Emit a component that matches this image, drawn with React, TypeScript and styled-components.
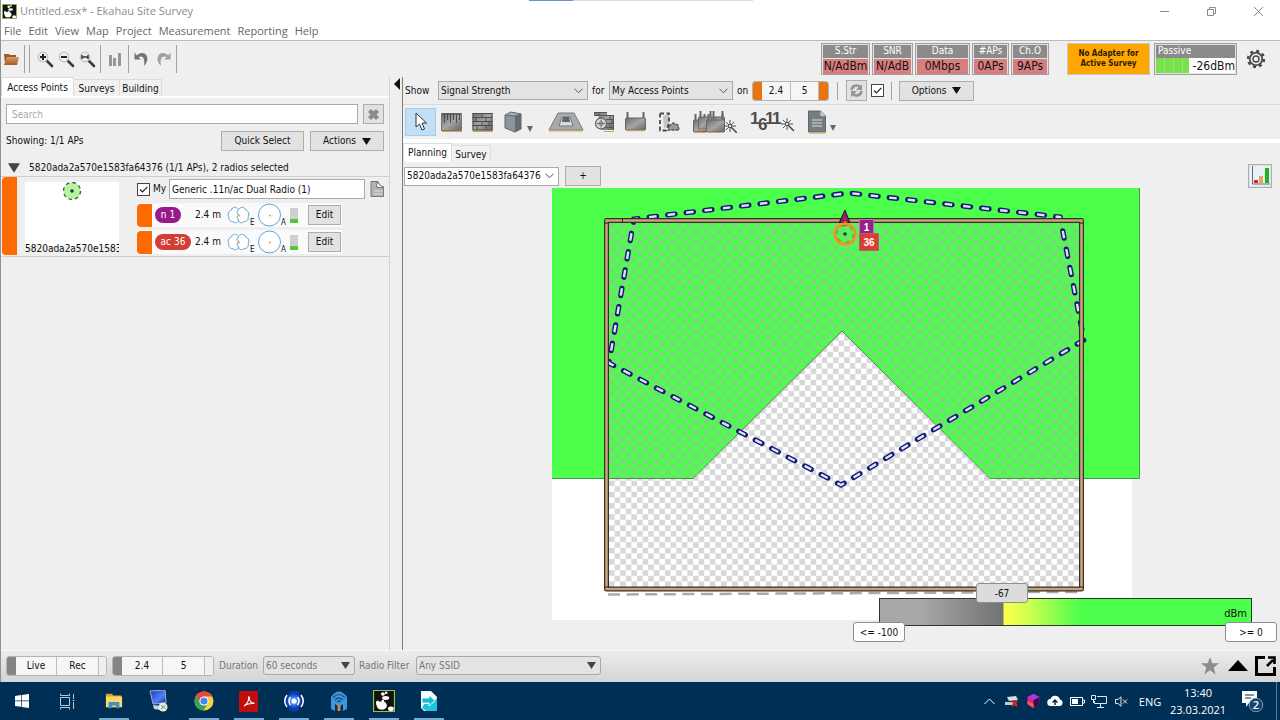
import React from "react";
import styled, { createGlobalStyle, css } from "styled-components";

const Global = createGlobalStyle`
  * { box-sizing: border-box; }
  body { margin: 0; background: #efefef; }
  button, select, input { font: inherit; color: inherit; margin: 0; border-radius: 0; }
  svg { display: block; flex: none; }
`;

const uiFont = `"DejaVu Sans Condensed", "DejaVu Sans", sans-serif`;
const titleFont = `"Open Sans", "Noto Sans", sans-serif`;

const Screen = styled.div`
  display: flex;
  flex-direction: column;
  min-height: 100vh;
  font: 10px/14px ${uiFont};
  color: #111;
  background: #efefef;
`;

const Window = styled.div`
  flex: 1;
  display: flex;
  flex-direction: column;
  border-left: 1px solid #8b9490;
`;

/* Title bar and menu */
const TitleBar = styled.header`
  position: relative;
  display: flex;
  align-items: center;
  height: 22px;
  padding-left: 1px;
  gap: 3px;
  background: #fff;
  color: #8c8c8c;
  font: 11px/16px ${titleFont};
`;
const Title = styled.h1`
  flex: 1;
  margin: 0;
  font-size: 11px;
  font-weight: 400;
`;
const DragHandle = styled.span`
  position: absolute;
  top: 0;
  left: 50%;
  width: 224px;
  height: 1px;
  margin-left: -112px;
  background: linear-gradient(90deg, #6f93bd 44px, #d9d9d9 44px);
`;
const CaptionButton = styled.button`
  display: grid;
  place-items: center;
  width: 44px;
  height: 22px;
  padding: 0;
  border: 0;
  background: none;
  color: #8a8a8a;
`;
const MenuBar = styled.nav`
  display: flex;
  gap: 7px;
  height: 19px;
  padding-left: 3px;
  background: #fff;
  border-bottom: 1px solid #b9bdbd;
  font: 11px/18px ${titleFont};
`;
const MenuLink = styled.a`
  color: #666;
  text-decoration: none;
`;

/* Main tool bar */
const ToolBar = styled.div`
  display: flex;
  align-items: center;
  height: 36px;
  padding-right: 14px;
`;
const Tools = styled.div`
  flex: 1;
  display: flex;
  align-items: center;
`;
const IconButton = styled.button<{ $w?: number; $h?: number; $active?: boolean }>`
  display: flex;
  align-items: center;
  justify-content: center;
  width: ${(p) => p.$w ?? 21}px;
  height: ${(p) => p.$h ?? 28}px;
  padding: 0;
  border: 1px solid ${(p) => (p.$active ? "#a5cdef" : "transparent")};
  background: ${(p) => (p.$active ? "#c2dff5" : "none")};
`;
const Rule = styled.span<{ $h?: number; $m?: number }>`
  width: 1px;
  height: ${(p) => p.$h ?? 28}px;
  margin: 0 ${(p) => p.$m ?? 2}px;
  background: #a0a0a0;
`;
const Metrics = styled.div`
  display: flex;
  gap: 2px;
`;
const Metric = styled.div<{ $w: number }>`
  width: ${(p) => p.$w}px;
  height: 32px;
  border: 1px solid #a0a0a0;
  padding: 1px;
  background: #e2e2e2;
  text-align: center;
  overflow: hidden;
`;
const MetricName = styled.div<{ $left?: boolean }>`
  height: 13px;
  background: #8b8b8b;
  color: #fff;
  line-height: 12px;
  text-align: ${(p) => (p.$left ? "left" : "center")};
  padding-left: ${(p) => (p.$left ? 2 : 0)}px;
`;
const MetricValue = styled.div`
  height: 15px;
  margin-top: 1px;
  background: #d58080;
  color: #1c0d0d;
  font-size: 12px;
  line-height: 15px;
  white-space: nowrap;
`;
const AdapterButton = styled.button`
  width: 83px;
  height: 32px;
  margin: 0 4px 0 18px;
  padding: 0;
  border: 1px solid #c9c9c9;
  background: #ffa602;
  color: #2b1a00;
  font-size: 8px;
  line-height: 10px;
  font-weight: 700;
`;
const PassiveLevel = styled.div`
  display: flex;
  align-items: center;
  justify-content: space-between;
  height: 15px;
  background: #fff;
  font-size: 12px;
`;
const LevelBar = styled.span`
  width: 33px;
  height: 15px;
  background: repeating-linear-gradient(90deg, #7be04e 0 8px, #93ea6c 8px 9px);
`;

/* Work area */
const Body = styled.div`
  flex: 1;
  display: flex;
`;
const SidePanel = styled.aside`
  width: 389px;
  display: flex;
  flex-direction: column;
  border-right: 1px solid #d2d2d2;
`;
const Splitter = styled.div`
  width: 13px;
  display: flex;
  justify-content: flex-end;
  border-right: 1px solid #7c7c7c;
`;
const CollapseButton = styled.button`
  width: 8px;
  height: 14px;
  padding: 0;
  border: 0;
  background: none;
`;
const Tabs = styled.div<{ $plain?: boolean }>`
  display: flex;
  align-items: flex-end;
  height: ${(p) => (p.$plain ? 19 : 21)}px;
  border-bottom: ${(p) => (p.$plain ? "0" : "2px solid #fff")};
`;
const Tab = styled.button<{ $on?: boolean; $w: number; $low?: boolean }>`
  width: ${(p) => p.$w}px;
  height: 17px;
  padding: 0;
  white-space: nowrap;
  border: 1px solid #dcdcdc;
  border-bottom: 0;
  border-left-width: 0;
  background: #f1f1f1;
  line-height: 15px;
  ${(p) => p.$on && css`
    height: 19px;
    background: #fff;
    border-left-width: 1px;
  `}
  ${(p) => p.$low && css`line-height: 18px;`}
`;
const SearchRow = styled.div`
  display: flex;
  gap: 5px;
  padding: 6px 5px 0;
`;
const TextBox = styled.input<{ $pad?: number }>`
  flex: 1;
  min-width: 0;
  height: 20px;
  padding: 0 ${(p) => p.$pad ?? 5}px;
  border: 1px solid #a9a9a9;
  background: #fff;
  &::placeholder { color: #aaa; opacity: 1; }
`;
const Btn = styled.button<{ $w: number; $h?: number }>`
  display: flex;
  align-items: center;
  justify-content: center;
  gap: 6px;
  width: ${(p) => p.$w}px;
  height: ${(p) => p.$h ?? 20}px;
  padding: 0;
  border: 1px solid #adadad;
  background: #e2e2e2;
  white-space: nowrap;
`;
const SummaryRow = styled.div`
  display: flex;
  align-items: center;
  gap: 6px;
  padding: 7px 5px 0;
`;
const Grow = styled.span`
  flex: 1;
`;
const TreeRow = styled.div`
  display: flex;
  align-items: center;
  gap: 9px;
  height: 26px;
  padding: 8px 0 0 7px;
  border-bottom: 1px solid #cfcfcf;
`;
const ApCard = styled.section`
  display: flex;
  height: 80px;
  padding-left: 1px;
  border-bottom: 1px solid #cfcfcf;
`;
const SelectedMark = styled.span<{ $w: number; $h: number }>`
  width: ${(p) => p.$w}px;
  height: ${(p) => p.$h}px;
  border-radius: 4px 0 0 4px;
  background: #ff6a00;
`;
const Thumb = styled.div`
  display: flex;
  flex-direction: column;
  justify-content: space-between;
  width: 94px;
  height: 74px;
  margin: 5px 18px 0 8px;
  background: linear-gradient(#fff 64px, transparent 64px);
  overflow: hidden;
  white-space: nowrap;
`;
const ThumbIcon = styled.span`
  display: flex;
  justify-content: center;
  margin-top: -1px;
`;
const ApDetails = styled.div`
  flex: 1;
  padding-right: 3px;
`;
const ApName = styled.div`
  display: flex;
  align-items: center;
  gap: 3px;
  height: 24px;
`;
const CheckLabel = styled.label`
  display: flex;
  align-items: center;
  gap: 3px;
`;
const Check = styled.input.attrs({ type: "checkbox" })`
  appearance: none;
  width: 13px;
  height: 13px;
  border: 1px solid #444;
  background: #fff url("data:image/svg+xml,%3Csvg xmlns='http://www.w3.org/2000/svg' viewBox='0 0 11 11'%3E%3Cpath d='M2 5.5 4.5 8 9.3 2.8' fill='none' stroke='%23222' stroke-width='1.2'/%3E%3C/svg%3E");
`;
const Radio = styled.div`
  display: flex;
  align-items: center;
  width: 205px;
  height: 24px;
  margin: 2px 0 3px;
  background: #fafafa;
`;
const Pill = styled.div<{ $color: string; $w: number }>`
  width: ${(p) => p.$w}px;
  height: 16px;
  margin-left: 3px;
  border-radius: 8px;
  background: ${(p) => p.$color};
  color: #fff;
  text-align: center;
  line-height: 16px;
`;
const PillSlot = styled.div`
  width: 43px;
`;
const Height = styled.span`
  width: 32px;
`;
const Plot = styled.span<{ $w?: number }>`
  display: flex;
  align-items: flex-end;
  width: ${(p) => p.$w ?? 31}px;
  height: 24px;
  font-size: 8px;
  line-height: 8px;
`;
const Power = styled.span`
  width: 8px;
  height: 15px;
  margin: 0 10px 0 1px;
  background: linear-gradient(#cfcfcf 11px, #52c832 11px);
`;

/* Map view */
const View = styled.main`
  flex: 1;
  min-width: 0;
  display: flex;
  flex-direction: column;
`;
const FilterRow = styled.div`
  display: flex;
  align-items: center;
  height: 28px;
  padding-left: 2px;
  border-bottom: 1px solid #dadada;
`;
const SelectWrap = styled.label<{ $w: number; $white?: boolean; $round?: boolean; $h?: number }>`
  position: relative;
  display: flex;
  align-items: center;
  width: ${(p) => p.$w}px;
  height: ${(p) => p.$h ?? 19}px;
  border: 1px solid #a9a9a9;
  border-radius: ${(p) => (p.$round ? 3 : 0)}px;
  background: ${(p) => (p.$white ? "#fff" : "#e3e3e3")};
  svg { position: absolute; right: 4px; pointer-events: none; }
  select {
    appearance: none;
    width: 100%;
    height: 100%;
    padding: 0 0 0 2px;
    border: 0;
    background: none;
    outline: 0;
    opacity: 1;
  }
`;
const FieldText = styled.span<{ $w: number }>`
  width: ${(p) => p.$w}px;
`;
const Segments = styled.div`
  display: flex;
  height: 20px;
  border: 1px solid #b4b4b4;
  border-radius: 3px;
  background: #f6f6f6;
  overflow: hidden;
`;
const Segment = styled.button<{ $w: number }>`
  width: ${(p) => p.$w}px;
  padding: 0;
  border: 0;
  border-right: 1px solid #bdbdbd;
  background: none;
`;
const Cap = styled.span<{ $color: string; $w?: number }>`
  width: ${(p) => p.$w ?? 9}px;
  background: ${(p) => p.$color};
`;
const EditRow = styled.div`
  display: flex;
  align-items: center;
  height: 38px;
  padding: 0 2px;
  border-bottom: 4px solid #fff;
`;
const FloorRow = styled.div`
  display: flex;
  align-items: center;
  gap: 6px;
  height: 26px;
  padding: 2px 8px 0 1px;
`;
const MapArea = styled.div`
  position: relative;
  flex: 1;
  display: flex;
  min-height: 300px;
`;
const MapSvg = styled.svg`
  flex: 1;
  width: 100%;
  min-width: 0;
`;
const Legend = styled.div`
  position: absolute;
  right: 28px;
  bottom: 24px;
  width: 373px;
  height: 28px;
  border: 1px solid #2a3a2a;
  background: linear-gradient(90deg, #a8a8a8 40px, #727272 123px, #fbff4d 124px, #d8ff4d 145px, #4dff4d 200px);
  font-size: 11px;
  line-height: 30px;
  text-align: right;
  padding-right: 4px;
`;
const LegendTag = styled.span<{ $x: number; $y: number; $grey?: boolean }>`
  position: absolute;
  left: ${(p) => p.$x}px;
  top: ${(p) => p.$y}px;
  width: 52px;
  height: 20px;
  border: 1px solid #8e8e8e;
  border-radius: 3px;
  background: ${(p) => (p.$grey ? "#dcdcdc" : "#fff")};
  font-size: 10px;
  line-height: 19px;
  text-align: center;
`;

/* Survey control bar */
const StatusBar = styled.div`
  display: flex;
  align-items: center;
  height: 32px;
  padding: 0 4px 2px 5px;
  background: linear-gradient(#ececec, #d4d4d4);
  border-top: 1px solid #f8f8f8;
`;
const Muted = styled.span<{ $w: number }>`
  width: ${(p) => p.$w}px;
  color: #777;
  white-space: nowrap;
`;
const Gap = styled.span<{ $w: number }>`
  width: ${(p) => p.$w}px;
`;

/* Desktop task bar */
const TaskBar = styled.footer`
  display: flex;
  height: 38px;
  background: #002f55;
  color: #fff;
  font: 11px/17px ${titleFont};
`;
const TaskButton = styled.button<{ $open?: boolean; $w?: number }>`
  display: grid;
  place-items: center;
  width: ${(p) => p.$w ?? 45}px;
  height: 38px;
  padding: 0;
  border: 0;
  background: ${(p) => (p.$open ? "linear-gradient(#76a9d4,#76a9d4) 50% 100% / 30px 2px no-repeat" : "none")};
`;
const TaskGroup = styled.div`
  display: flex;
  gap: 0;
  padding-left: 3px;
`;
const Tray = styled.div`
  flex: 1;
  display: flex;
  justify-content: flex-end;
  align-items: center;
`;
const TrayIcon = styled.span`
  display: grid;
  place-items: center;
  width: 22px;
`;
const Lang = styled.span`
  width: 36px;
  text-align: center;
`;
const Clock = styled.time`
  width: 60px;
  text-align: center;
  white-space: nowrap;
`;
const Notice = styled.button`
  display: grid;
  place-items: center;
  width: 49px;
  height: 38px;
  padding: 0;
  border: 0;
  border-right: 1px solid #5d7a94;
  margin-right: 3px;
  background: none;
`;

const Down = ({ s = 9, color = "currentColor" }: { s?: number; color?: string }) => (
  <svg width={s} height={s - 2} viewBox="0 0 9 7"><path d="M0 0h9L4.500 7z" fill={color} /></svg>
);
const Chevron = () => (
  <svg width="9" height="6" viewBox="0 0 9 6"><path d="M.5.7 4.500 4.800 8.500.7" fill="none" stroke="#555" /></svg>
);
const Logo = ({ s }: { s: number }) => (
  <svg width={s} height={s} viewBox="0 0 20 22" preserveAspectRatio="none">
    <rect x=".5" y=".5" width="19" height="21" fill="#10140c" stroke="#9bc63b" />
    <circle cx="9" cy="4" r="1.800" fill="#fff" /><circle cx="12" cy="2.800" r="1.200" fill="#fff" />
    <ellipse cx="11.500" cy="8" rx="3.200" ry="1.900" fill="#fff" />
    <ellipse cx="8" cy="15.500" rx="4.600" ry="4.300" fill="#fff" /><ellipse cx="4.200" cy="13" rx="1.600" ry="2.600" fill="#fff" />
    <circle cx="9" cy="11" r="1.200" fill="#fff" /><ellipse cx="16.300" cy="18.700" rx="2.700" ry="2.300" fill="#fff" />
  </svg>
);
const Zoom = ({ kind }: { kind: "in" | "out" | "fit" }) => (
  <svg width="17" height="17" viewBox="0 0 17 17">
    <path d="m9.500 9.500 5.500 5.500" stroke="#3c3c3c" strokeWidth="2.600" strokeLinecap="round" />
    <circle cx="6" cy="6" r="4.800" fill="#ededed" stroke="#c4c4c4" strokeWidth="1.300" />
    {kind === "fit"
      ? <path d="M2.500 6h7M3 4v4M9 4v4" stroke="#333" strokeWidth="1.400" />
      : <path d={kind === "in" ? "M3 6h6M6 3v6" : "M3 6h6"} stroke="#222" strokeWidth="2" />}
  </svg>
);
const Undo = ({ flip }: { flip?: boolean }) => (
  <svg width="17" height="17" viewBox="0 0 17 17">
    <g transform={flip ? "matrix(-1 0 0 1 17 0)" : undefined}>
      <path d="M1.500 1.500v7h6.500L5.500 6.200C9 4 12.500 7 11 15 16.500 10 15 2 9 2 6.800 2 5 3 3.800 4.400z" fill={flip ? "#a0a0a0" : "#747474"} />
    </g>
  </svg>
);
const DefsHolder = styled.svg`
  position: absolute;
`;
const MetalDefs = () => (
  <DefsHolder width="0" height="0">
    <defs>
      <linearGradient id="metal" x1="0" y1="0" x2="1" y2="1">
        <stop offset="0" stopColor="#6c6c6c" /><stop offset=".5" stopColor="#a5a5a5" /><stop offset="1" stopColor="#666" />
      </linearGradient>
      <linearGradient id="folder" x1="0" y1="0" x2="0" y2="1">
        <stop offset="0" stopColor="#e09a62" /><stop offset="1" stopColor="#a95a20" />
      </linearGradient>
      <linearGradient id="blue" x1="0" y1="0" x2="1" y2="1">
        <stop offset="0" stopColor="#1a2fd0" /><stop offset=".6" stopColor="#4d83f0" /><stop offset="1" stopColor="#0b1f9c" />
      </linearGradient>
      <radialGradient id="orb"><stop offset="0" stopColor="#bfe6ff" /><stop offset=".5" stopColor="#2b74e8" /><stop offset="1" stopColor="#0a2aa0" /></radialGradient>
    </defs>
  </DefsHolder>
);
const Wand = ({ x, y }: { x: number; y: number }) => (
  <g transform={`translate(${x} ${y})`} stroke="#444" strokeWidth=".9">
    <path d="M0 6h12M6 0v12M2 2l8 8M10 2 2 10" /><path d="m7 7 6 6" strokeWidth="1.500" /><circle cx="6" cy="6" r="1.600" fill="#fff" />
  </g>
);
const Router = ({ x = 0, y = 0, w = 20 }: { x?: number; y?: number; w?: number }) => (
  <g transform={`translate(${x} ${y})`}>
    <path d={`M2.500 0v8M${w - 2.5} 0v8`} stroke="#666" strokeWidth="2" />
    <rect x=".5" y="6" width={w - 1} height="12" rx="1" fill="url(#metal)" stroke="#666" />
    <path d={`M1 18.800h${w - 2}`} stroke="#d8a24a" />
  </g>
);
const Elevation = () => (
  <svg width="23" height="24" viewBox="0 0 23 24">
    <path d="M11.500 6.500C9.500 3.500 5 3.500 4.500 7 1 8 .5 12 1.800 13.500 1 17 4 19 6 18.500c2 2.500 5 1 5.500-1.500.5 2.500 3.500 4 5.500 1.500 2 .5 5-1.500 4.200-5 1.300-1.500.8-5.500-2.700-6.500-.5-3.500-5-3.500-7-.5z" fill="#fff" stroke="#56a5d8" />
    <path d="M11.500 6.500q-3 3 0 5.500-3 2 0 5" fill="none" stroke="#56a5d8" /><circle cx="12" cy="12.500" r="1" fill="#f29a3b" />
  </svg>
);
const Azimuth = () => (
  <svg width="23" height="24" viewBox="0 0 23 24">
    <circle cx="11.500" cy="12" r="11" fill="#fff" stroke="#56a5d8" /><circle cx="12" cy="12.500" r="1" fill="#f29a3b" />
  </svg>
);
const PageIcon = () => (
  <svg width="14" height="16" viewBox="0 0 14 16">
    <path d="M1 .500h7l2 5h3.500v10H1z" fill="#b4b4b4" stroke="#777" /><path d="m6 .500 7.500 6H7z" fill="#eee" stroke="#777" /><path d="M4 10h9M4 13h9" stroke="#ddd" />
  </svg>
);

const menu = ["File", "Edit", "View", "Map", "Project", "Measurement", "Reporting", "Help"];
const metrics: [string, string, number][] = [
  ["S.Str", "N/AdBm", 49], ["SNR", "N/AdB", 41], ["Data", "0Mbps", 55], ["#APs", "0APs", 37], ["Ch.O", "9APs", 38],
];
const radios = [
  { name: "n 1", color: "#98198a", w: 26 },
  { name: "ac 36", color: "#d43c36", w: 36 },
];

const perimeter = "M609 363 634 219 849 193 1060 217 1084 340 841 485Z";

function FloorMap() {
  return (
    <MapSvg viewBox="403 188 877 462" preserveAspectRatio="xMidYMin meet" role="img" aria-label="Signal strength map">
      <defs>
        <pattern id="check" x="609" y="223" width="11.200" height="11.200" patternUnits="userSpaceOnUse">
          <path d="M0 0h5.600v5.600H0zM5.600 5.600h5.600v5.600H5.600z" fill="#d8d8d8" />
        </pattern>
        <pattern id="checkGreen" x="609" y="223" width="11.200" height="11.200" patternUnits="userSpaceOnUse">
          <path d="M0 0h5.600v5.600H0zM5.600 5.600h5.600v5.600H5.600z" fill="#74dc74" />
        </pattern>
        <clipPath id="coverage"><path d="M552 188h587v290H990L842 331 693 478H552z" /></clipPath>
      </defs>
      <path d="M552 188h580v432H552z" fill="#fff" />
      <path d="M608 222h473v366H608z" fill="url(#check)" />
      <g clipPath="url(#coverage)">
        <path d="M552 188h588v290H552z" fill="#4bff4b" />
        <path d="M608 222h473v366H608z" fill="url(#checkGreen)" />
      </g>
      <path d="M1139.500 188v290.500H990L842 331 693 478.500H552" fill="none" stroke="#4f8f4f" strokeWidth="1" />
      <path d={perimeter} fill="none" stroke="#14187a" strokeWidth="5.200" strokeLinecap="round" strokeDasharray="7.500 11.100" strokeDashoffset="6" />
      <path d={perimeter} fill="none" stroke="#dfe3f2" strokeWidth="2.400" strokeDasharray="7.500 11.100" strokeDashoffset="6" />
      <path d="M608 594.500 976 592.500M1028 592h50" stroke="#aaa" strokeWidth="2.500" strokeDasharray="12 6.600" />
      <path d="M606.500 220.500H1081.500V589H606.500z" fill="none" stroke="#3a2e24" strokeWidth="5" strokeLinejoin="round" />
      <path d="M606.500 220.500H1081.500V589H606.500z" fill="none" stroke="#c5a37c" strokeWidth="2.600" />
      <path d="M622.500 218v5M604 223h5M1079 223h5M604 587h5M1079 587h5" stroke="#2a211a" />
      <path d="m845 210 5 13-4-3-1 5-2-5-4 3z" fill="#94207c" stroke="#30102c" />
      <path d="m845 219 3 7h-6z" fill="#f0402a" />
      <circle cx="845" cy="234" r="10.300" fill="none" stroke="#f59222" strokeWidth="2.600" />
      <circle cx="845" cy="234" r="8.300" fill="none" stroke="#4e8a30" strokeDasharray="4 4.700" />
      <circle cx="845" cy="234" r="1.800" fill="#2b3a22" />
      <path d="M859.500 219.500h14v15h-14z" fill="#99208a" stroke="#b777b0" />
      <path d="M859.500 233.500h19v17h-19z" fill="#d83d36" stroke="#a06c60" />
      <g fill="#fff" fontFamily="Liberation Sans, sans-serif" fontSize="10" fontWeight="700" textAnchor="middle">
        <text x="866.500" y="231">1</text><text x="869" y="246">36</text>
      </g>
    </MapSvg>
  );
}

function SideContent() {
  return (
    <SidePanel>
      <Tabs role="tablist">
        <Tab role="tab" $on $w={73}>Access Points</Tab>
        <Tab role="tab" $w={46}>Surveys</Tab>
        <Tab role="tab" $w={42}>Building</Tab>
      </Tabs>
      <SearchRow>
        <TextBox placeholder="Search" aria-label="Search" />
        <Btn $w={21} aria-label="Clear search">
          <svg width="13" height="13" viewBox="0 0 13 13"><path d="m2.500 2.500 8 8M10.500 2.500l-8 8" stroke="#8b8b8b" strokeWidth="4.400" /></svg>
        </Btn>
      </SearchRow>
      <SummaryRow>
        Showing: 1/1 APs <Grow />
        <Btn $w={83}>Quick Select</Btn>
        <Btn $w={74}>Actions <Down /></Btn>
      </SummaryRow>
      <TreeRow><Down s={12} color="#444" />5820ada2a570e1583fa64376 (1/1 APs), 2 radios selected</TreeRow>
      <ApCard>
        <SelectedMark $w={15} $h={78} />
        <Thumb>
          <ThumbIcon>
            <svg width="20" height="20" viewBox="0 0 20 20">
              <circle cx="10" cy="10" r="8.500" fill="#b9f2a0" stroke="#3c5a34" strokeWidth="1.300" strokeDasharray="3.500 3.200" /><circle cx="10" cy="10" r="1.800" fill="#333" />
            </svg>
          </ThumbIcon>
          5820ada2a570e1583fa64376
        </Thumb>
        <ApDetails>
          <ApName>
            <CheckLabel><Check defaultChecked /> My</CheckLabel>
            <TextBox $pad={2} defaultValue="Generic .11n/ac Dual Radio (1)" aria-label="Access point name" />
            <IconButton $w={18} $h={20} aria-label="Notes"><PageIcon /></IconButton>
          </ApName>
          {radios.map((r) => (
            <Radio key={r.name}>
              <SelectedMark $w={15} $h={23} />
              <PillSlot><Pill $color={r.color} $w={r.w}>{r.name}</Pill></PillSlot>
              <Height>2.4 m</Height>
              <Plot><Elevation />E</Plot>
              <Plot><Azimuth />A</Plot>
              <Power />
              <Btn $w={33}>Edit</Btn>
            </Radio>
          ))}
        </ApDetails>
      </ApCard>
    </SidePanel>
  );
}

function Editing() {
  return (
    <EditRow>
      <IconButton $w={31} $active aria-label="Select">
        <svg width="14" height="20" viewBox="0 0 14 20"><path d="M2 1v14l3.500-3 2.500 6 2.500-1L8 11h4.500z" fill="#fff" stroke="#333" /></svg>
      </IconButton>
      <IconButton $w={31} aria-label="Scale">
        <svg width="22" height="20" viewBox="0 0 22 20"><path d="M.5 1.500h20v17H.5z" fill="url(#metal)" stroke="#777" /><path d="M1 2h19M3.500 2v9M6.500 2v6M9.500 2v9M12.500 2v6M15.500 2v9M18.500 2v6" stroke="#4c4c4c" /><path d="M1 19.500h20" stroke="#d8a24a" /></svg>
      </IconButton>
      <IconButton $w={31} aria-label="Walls">
        <svg width="22" height="20" viewBox="0 0 22 20"><path d="M.5 1h20v17.500H.5z" fill="url(#metal)" /><path d="M.5 1.500h20M.5 5.500h20M.5 9.500h20M.5 13.500h20M.5 18h20M1 1v17M20 1v17M10 1v4M4 5v4M14 5v4M10 9v4M17 9v4M5 13v5M14 13v5" stroke="#4c4c4c" /><path d="M1 19.500h20" stroke="#d8a24a" /></svg>
      </IconButton>
      <IconButton $w={41} aria-label="Attenuation area">
        <svg width="29" height="22" viewBox="0 0 29 22"><path d="M1 4v13l10 4V5z" fill="#8e949b" /><path d="m11 5 6-2v15l-6 3z" fill="#666b72" /><path d="m1 4 6-3 10 2-6 2z" fill="#a9afb5" stroke="#666" /><path d="M1 4v13l10 4 6-3V3" fill="none" stroke="#666" /><path d="M23 15h6l-3 6z" fill="#666" /></svg>
      </IconButton>
      <Gap $w={7} />
      <IconButton $w={40} aria-label="Floor opening">
        <svg width="36" height="20" viewBox="0 0 36 20"><path d="M10 1h16l9 17H1z" fill="#a7abb0" stroke="#777" /><path d="M14 5h8l3 9H11z" fill="#d8dade" stroke="#777" /><path d="M15 5h6l1 5h-8z" fill="#5d6168" /><path d="M1 19h34" stroke="#d8a24a" /></svg>
      </IconButton>
      <IconButton $w={36} aria-label="Auto planner">
        <svg width="22" height="22" viewBox="0 0 22 22"><path d="M1 1h13v4H1zM5 4h16v15H9z" fill="url(#metal)" /><path d="M1 1.500h13M1 4.500h20M13 8.500h8M14 12.500h7M13 16.500h8M6 1v3M17 5v3M19 9v3M17 13v3M20.500 4v15" stroke="#555" /><circle cx="8" cy="12.500" r="5.500" fill="#ddd" stroke="#666" strokeWidth="1.300" /><path d="M4 12.500h8M8 8.500v8" stroke="#666" /><circle cx="8" cy="12.500" r="2.200" fill="none" stroke="#888" /><path d="M11 20.500h10" stroke="#d8a24a" /></svg>
      </IconButton>
      <IconButton $w={27} aria-label="Access point"><svg width="22" height="20" viewBox="0 0 22 20"><Router w={21} /></svg></IconButton>
      <IconButton $w={40} aria-label="Coverage area">
        <svg width="22" height="20" viewBox="0 0 22 20"><path d="m5 4 6-2v10l-5 5z" fill="#c4c4c4" /><path d="M2 1.500h9v10l-3 7H2z" fill="none" stroke="#4c4c4c" strokeWidth="1.800" strokeDasharray="4 2.500" /><path d="m11 14 4-3 5 2 1 5H10z" fill="#999" stroke="#555" strokeWidth="1.400" strokeDasharray="3 1" /></svg>
      </IconButton>
      <IconButton $w={52} aria-label="Optimize access points">
        <svg width="44" height="22" viewBox="0 0 44 22"><Router x={0} y={3} w={14} /><Router x={5} y={0} w={15} /><Router x={18} y={0} w={14} /><Router x={13} y={3} w={19} /><Wand x={31} y={9} /></svg>
      </IconButton>
      <IconButton $w={62} aria-label="Channel planner">
        <svg width="44" height="24" viewBox="0 0 44 24">
          <g fontFamily="Liberation Sans, sans-serif" fontWeight="700" fontSize="17" fill="#4c4c4c"><text x="0" y="14">1</text><text x="8" y="20">6</text><text x="15" y="14">1</text><text x="22" y="14">1</text></g>
          <Wand x={31} y={8} />
        </svg>
      </IconButton>
      <IconButton $w={38} aria-label="Report">
        <svg width="28" height="24" viewBox="0 0 28 24"><path d="M.5 1h12l5 5v16H.5z" fill="#777c80" stroke="#666" /><path d="M12.500 1v5h5z" fill="#ccc" /><path d="M4 10h10M4 13h10M4 16h10" stroke="#ddd" /><path d="M1 23h17" stroke="#d8a24a" /><path d="M22 15h6l-3 6z" fill="#666" /></svg>
      </IconButton>
    </EditRow>
  );
}

const taskIcons: [string, React.ReactNode, boolean][] = [
  ["File Explorer", <svg key="a" width="18" height="20" viewBox="0 0 20 20"><path d="M1 2h7l1 2h9v4H1z" fill="#d9a72e" /><path d="M1 5h18v12H1z" fill="#ffd767" /><path d="M4 18v-7h12v7h-4v-3H8v3z" fill="#3f91c9" /></svg>, true],
  ["Remote Desktop", <svg key="b" width="20" height="22" viewBox="0 0 20 22"><path d="m1 1 15-1 1 13-13 1z" fill="url(#blue)" stroke="#aac" /><path d="m4 15 9 1-2 4-6-1z" fill="#ccd" /><circle cx="14" cy="17" r="4.500" fill="#e8e8e8" /><path d="m12 15 2 2-2 2M16.500 15l-2 2 2 2" fill="none" stroke="#4a4" /></svg>, false],
  ["Chrome", <svg key="c" width="20" height="20" viewBox="0 0 20 20"><circle cx="10" cy="10" r="9.500" fill="#fdcf3f" /><path d="M1.800 5.200A9.500 9.500 0 0 1 18.300 5.500H10L6 12z" fill="#e24a3c" /><path d="M1.800 5.200A9.500 9.500 0 0 0 9.500 19.500L14 12H6z" fill="#34a353" /><circle cx="10" cy="10" r="4.600" fill="#fff" /><circle cx="10" cy="10" r="3.600" fill="#4285f4" /></svg>, true],
  ["Acrobat Reader", <svg key="d" width="19" height="21" viewBox="0 0 19 21"><path d="M0 0h19v21H0z" fill="#c20d0d" /><path d="M5 15c3-2 5-5 4.500-8.500 0-1 .8-1 .8 0 0 4 2 5.500 4.700 5.500 1 1-6-.5-10 3z" fill="none" stroke="#fff" strokeWidth="1.100" /></svg>, true],
  ["TamoGraph", <svg key="e" width="22" height="22" viewBox="0 0 22 22"><path d="M6 2q5-2.500 10 0v18q-5 3-10 0z" fill="#1238b8" /><circle cx="11" cy="11" r="8.500" fill="url(#orb)" /><path d="M4 5q-4.500 6 0 12M18 5q4.500 6 0 12M7.500 7q-3 4 0 8M14.500 7q3 4 0 8" fill="none" stroke="#fff" strokeWidth="1.500" /><circle cx="11" cy="11" r="2.600" fill="#fff" /></svg>, true],
  ["Wi-Fi Scanner", <svg key="f" width="18" height="22" viewBox="0 0 18 22"><path d="M1 7q8-11 16 0v12l-4 2v-7l-4 3-4-3v7l-4-2z" fill="#3f98dc" /><path d="M3 8q6-7 12 0M5 10q4-4 8 0M7 12q2-2 4 0" fill="none" stroke="#164f86" strokeWidth="1.200" /><path d="M7.500 15h3v6h-3z" fill="#e0812f" /></svg>, true],
  ["Ekahau Site Survey", <Logo key="g" s={22} />, true],
  ["File Transfer", <svg key="h" width="18" height="22" viewBox="0 0 18 22"><path d="M1 1h10l6 6v14H4l-3-3z" fill="#f4fbfc" /><path d="M4 14h8l5-6v13H6l-4-3z" fill="#1cc5dc" /><path d="M2 8h7V5l6 5.500L9 16v-3H2z" fill="#18b9d6" stroke="#fff" strokeWidth=".8" /></svg>, true],
];

export default function App() {
  return (
    <Screen>
      <Global />
      <MetalDefs />
      <Window>
        <TitleBar>
          <Logo s={15} />
          <Title>Untitled.esx* - Ekahau Site Survey</Title>
          <CaptionButton aria-label="Minimize"><svg width="9" height="9"><path d="M0 4.500h9" stroke="currentColor" /></svg></CaptionButton>
          <CaptionButton aria-label="Restore"><svg width="9" height="9"><path d="M.5 2.500h6v6h-6zM2.500 2.500v-2h6v6h-2" fill="none" stroke="currentColor" /></svg></CaptionButton>
          <CaptionButton aria-label="Close"><svg width="9" height="9"><path d="m0 0 9 9M9 0 0 9" stroke="currentColor" /></svg></CaptionButton>
          <DragHandle />
        </TitleBar>
        <MenuBar>{menu.map((m) => <MenuLink key={m} href="#">{m}</MenuLink>)}</MenuBar>
        <ToolBar>
          <Tools>
            <IconButton aria-label="Open">
              <svg width="16" height="14" viewBox="0 0 16 14"><path d="M0 2h5l1 1h6v3H3L1 12z" fill="#9c5a2b" /><path d="M3 5h12l-2 8H0z" fill="url(#folder)" /></svg>
            </IconButton>
            <Rule /><Rule /><Gap $w={3} />
            <IconButton aria-label="Zoom in"><Zoom kind="in" /></IconButton>
            <IconButton aria-label="Zoom out"><Zoom kind="out" /></IconButton>
            <IconButton aria-label="Zoom to fit"><Zoom kind="fit" /></IconButton>
            <Rule />
            <IconButton $w={24} aria-label="Statistics"><svg width="12" height="13"><path d="M0 2h3v11H0zM4 5h3v8H4zM9 0h3v13H9z" fill="#969696" /></svg></IconButton>
            <Rule $m={1} />
            <IconButton $w={22} aria-label="Undo"><Undo /></IconButton>
            <IconButton $w={22} aria-label="Redo"><Undo flip /></IconButton>
            <Rule />
          </Tools>
          <Metrics>
            {metrics.map(([n, v, w]) => <Metric key={n} $w={w}><MetricName>{n}</MetricName><MetricValue>{v}</MetricValue></Metric>)}
          </Metrics>
          <AdapterButton>No Adapter for Active Survey</AdapterButton>
          <Metric $w={83}><MetricName $left>Passive</MetricName><PassiveLevel><LevelBar />-26dBm</PassiveLevel></Metric>
          <Gap $w={8} />
          <IconButton aria-label="Settings">
            <svg width="20" height="20" viewBox="0 0 20 20" fill="none" stroke="#4a4a4a"><circle cx="10" cy="10" r="8" strokeWidth="2.400" strokeDasharray="3 3.280" /><circle cx="10" cy="10" r="6.300" strokeWidth="1.800" /><circle cx="10" cy="10" r="3" strokeWidth="1.400" /></svg>
          </IconButton>
        </ToolBar>
        <Body>
          <SideContent />
          <Splitter><CollapseButton aria-label="Collapse panel"><svg width="6" height="12"><path d="M6 0v12L0 6z" fill="#111" /></svg></CollapseButton></Splitter>
          <View>
            <FilterRow>
              <FieldText $w={33}>Show</FieldText>
              <SelectWrap $w={150}><select aria-label="Show"><option>Signal Strength</option></select><Chevron /></SelectWrap>
              <Gap $w={4} /><FieldText $w={17}>for</FieldText>
              <SelectWrap $w={124}><select aria-label="For"><option>My Access Points</option></select><Chevron /></SelectWrap>
              <Gap $w={4} /><FieldText $w={15}>on</FieldText>
              <Segments><Cap $color="#e87511" /><Segment $w={29}>2.4</Segment><Segment $w={28}>5</Segment><Cap $color="#e87511" /></Segments>
              <Rule $h={18} $m={8} />
              <Btn $w={21} $h={21} aria-label="Refresh">
                <svg width="15" height="15" viewBox="0 0 15 15"><path d="M2.500 7a5 5 0 0 1 8.500-3M12.500 8a5 5 0 0 1-8.500 3" fill="none" stroke="#959595" strokeWidth="2.600" /><path d="M13 1v6H7zM2 14V8h6z" fill="#959595" /></svg>
              </Btn>
              <Gap $w={4} /><Check defaultChecked aria-label="Auto refresh" />
              <Rule $h={18} $m={7} />
              <Btn $w={75}>Options <Down /></Btn>
            </FilterRow>
            <Editing />
            <Tabs role="tablist" $plain>
              <Tab role="tab" $on $w={49} $low>Planning</Tab>
              <Tab role="tab" $w={39}>Survey</Tab>
            </Tabs>
            <FloorRow>
              <SelectWrap $w={155} $white><select aria-label="Floor plan"><option>5820ada2a570e1583fa64376</option></select><Chevron /></SelectWrap>
              <Btn $w={36}>+</Btn>
              <Grow />
              <Btn $w={24} $h={24} aria-label="Toggle visualization">
                <svg width="20" height="20" viewBox="0 0 20 20"><path d="M0 0h20v20H0z" fill="#e8f1f8" /><path d="M2.500 0v18H20" fill="none" stroke="#667" /><path d="M4 14h4v3H4z" fill="#d22" /><path d="M9 10h4v7H9z" fill="#f0a050" /><path d="M15 2h4v15h-4z" fill="#1bb51b" /></svg>
              </Btn>
            </FloorRow>
            <MapArea>
              <FloorMap />
              <Legend>
                dBm
                <LegendTag $x={96} $y={-16} $grey>-67</LegendTag>
                <LegendTag $x={-27} $y={23}>&lt;= -100</LegendTag>
                <LegendTag $x={345} $y={23}>&gt;= 0</LegendTag>
              </Legend>
            </MapArea>
          </View>
        </Body>
        <StatusBar>
          <Segments><Cap $color="#858585" /><Segment $w={41}>Live</Segment><Segment $w={42}>Rec</Segment><Cap $color="#f0f0f0" $w={7} /></Segments>
          <Gap $w={5} />
          <Segments><Cap $color="#858585" /><Segment $w={41}>2.4</Segment><Segment $w={42}>5</Segment><Cap $color="#f0f0f0" $w={8} /></Segments>
          <Gap $w={5} />
          <Muted $w={44}>Duration</Muted>
          <SelectWrap as="span" $w={92} $round><Muted as="select" $w={90} aria-label="Duration" disabled><option>60 seconds</option></Muted><Down color="#444" /></SelectWrap>
          <Gap $w={4} />
          <Muted $w={57}>Radio Filter</Muted>
          <SelectWrap as="span" $w={185} $round><Muted as="select" $w={183} aria-label="Radio Filter" disabled><option>Any SSID</option></Muted><Down color="#444" /></SelectWrap>
          <Grow />
          <svg width="18" height="18" viewBox="0 0 18 18"><path d="m9 0 2.300 6.200H18l-5.300 4.200 1.900 7L9 13.200l-5.600 4.200 1.900-7L0 6.200h6.700z" fill="#8d8d8d" /></svg>
          <Gap $w={9} />
          <svg width="20" height="11"><path d="M10 0 20 11H0z" fill="#000" /></svg>
          <Gap $w={7} />
          <svg width="21" height="20" viewBox="0 0 21 20"><path d="M10 1.500H1.500v17h18V11" fill="none" stroke="#000" strokeWidth="3" /><path d="m12 10 6-6M13 1.500h6.500V8" fill="none" stroke="#000" strokeWidth="2.600" /></svg>
        </StatusBar>
      </Window>
      <TaskBar>
        <TaskButton $w={44} aria-label="Start"><svg width="14" height="14" viewBox="0 0 14 14"><path d="m0 2 6-.9v5.500H0zM6.700 1 14 0v6.600H6.700zM0 7.300h6v5.500L0 12zM6.700 7.300H14V14l-7.300-1z" fill="#fff" /></svg></TaskButton>
        <TaskButton $w={44} aria-label="Task view"><svg width="17" height="17" viewBox="0 0 17 17" fill="none" stroke="#b9c8d6"><path d="M2.500 4.500h9v8h-9zM2.500.5v2h9v-2M2.500 16.500v-2h9v2M15.500 1v5M15.500 9v7M14.500 7.500h2" /></svg></TaskButton>
        <TaskGroup>
          {taskIcons.map(([label, icon, open]) => <TaskButton key={label} aria-label={label} $open={open}>{icon}</TaskButton>)}
        </TaskGroup>
        <Tray>
          <TrayIcon><svg width="11" height="7"><path d="m.5 6 5-5 5 5" fill="none" stroke="#fff" /></svg></TrayIcon>
          <TrayIcon><svg width="15" height="13" viewBox="0 0 15 13"><path d="m3 2 9-1 2 4-9 1z" fill="#ddd" /><path d="M1 7h10l2 3H1z" fill="#c9c9c9" /><path d="m8 6 5 5M13 6l-5 5" stroke="#e02a2a" strokeWidth="2" /></svg></TrayIcon>
          <TrayIcon><svg width="13" height="14" viewBox="0 0 13 14"><path d="m6.500 0 6 3v7l-6 4-6-4V3z" fill="#e0267c" /><path d="m6.500 6 6-3v7l-6 4z" fill="#2a124c" /><path d="m.5 3 6-3 6 3-6 3z" fill="#a33be0" /><path d="m.5 7 6 3v4l-6-4z" fill="#ff5a4c" /></svg></TrayIcon>
          <TrayIcon><svg width="16" height="12" viewBox="0 0 16 12"><path d="M4 11a3.500 3.500 0 0 1-.5-7A5 5 0 0 1 13 4.500 3.300 3.300 0 0 1 12.500 11z" fill="#fff" /><path d="M8 10V6M5.500 7.500 8 5l2.500 2.500" fill="none" stroke="#002f55" strokeWidth="1.500" /></svg></TrayIcon>
          <TrayIcon><svg width="15" height="9"><path d="M.5.500h12v8H.5zM13 3h1.500v3H13" fill="none" stroke="#fff" /><path d="M2 2h6v5H2z" fill="#fff" /></svg></TrayIcon>
          <TrayIcon><svg width="16" height="13" viewBox="0 0 16 13" fill="none" stroke="#dfe7ee"><path d="M6 1.500h9.500v7H3.500V6M9.500 9v3M6 12.500h7M.5.500h4v4h-4zM2.500 5v3" /></svg></TrayIcon>
          <TrayIcon><svg width="13" height="11" viewBox="0 0 13 11" fill="none" stroke="#dfe7ee"><path d="M.5 3.500H3L6 .800v9.400L3 7.500H.5zM8 3.500l4 4M12 3.500l-4 4" /></svg></TrayIcon>
          <Lang>ENG</Lang>
          <Clock>13:40<br />23.03.2021</Clock>
          <Notice aria-label="2 notifications">
            <svg width="24" height="24" viewBox="0 0 24 24"><path d="M2 2h15v12H9l-3 4v-4H2z" fill="#fff" /><path d="M5 6h9M5 9h6" stroke="#002f55" /><circle cx="16" cy="16" r="6.800" fill="#11456f" stroke="#7e9ab3" /><text x="16" y="20" fontSize="11" fontWeight="600" fill="#fff" textAnchor="middle">2</text></svg>
          </Notice>
        </Tray>
      </TaskBar>
    </Screen>
  );
}
